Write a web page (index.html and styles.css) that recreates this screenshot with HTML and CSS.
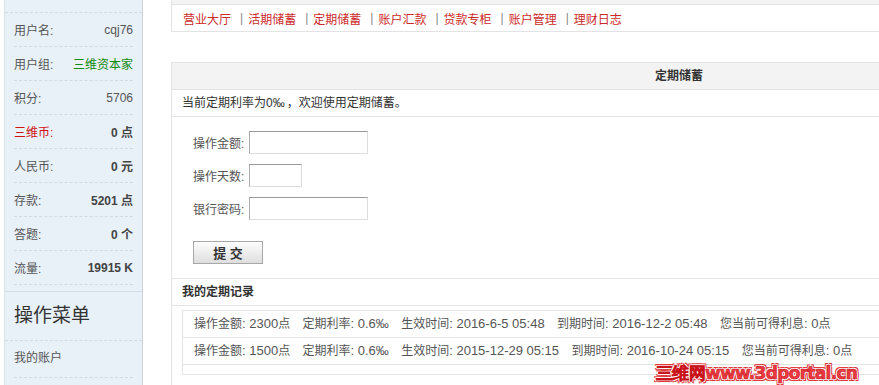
FILE: index.html
```html
<!DOCTYPE html>
<html>
  <head>
    <meta charset="utf-8">
    <link rel="stylesheet" href="styles.css">
  </head>
  <body>
    <div class="page">
      <div class="side">
        <ul class="info">
          <li><span class="lbl">用户名:</span><span class="val">cqj76</span></li>
          <li><span class="lbl">用户组:</span><span class="val green">三维资本家</span></li>
          <li><span class="lbl">积分:</span><span class="val">5706</span></li>
          <li><span class="lbl red">三维币:</span><span class="val b">0 点</span></li>
          <li><span class="lbl">人民币:</span><span class="val b">0 元</span></li>
          <li><span class="lbl">存款:</span><span class="val b">5201 点</span></li>
          <li><span class="lbl">答题:</span><span class="val b">0 个</span></li>
          <li><span class="lbl">流量:</span><span class="val b">19915 K</span></li>
        </ul>
        <div class="menu-title">操作菜单</div>
        <ul class="menu">
          <li>我的账户</li>
        </ul>
      </div>

      <div class="main">
        <div class="crumb"></div>
        <div class="nav">
          <a>营业大厅</a><span class="sep">|</span>
          <a>活期储蓄</a><span class="sep">|</span>
          <a>定期储蓄</a><span class="sep">|</span>
          <a>账户汇款</a><span class="sep">|</span>
          <a>贷款专柜</a><span class="sep">|</span>
          <a>账户管理</a><span class="sep">|</span>
          <a>理财日志</a>
        </div>

        <div class="panel">
          <div class="panel-head">定期储蓄</div>
          <div class="intro">当前定期利率为<em>0‰</em>，欢迎使用定期储蓄。</div>
          <div class="form">
            <div class="row"><label>操作金额:</label><input class="ipt" type="text"></div>
            <div class="row"><label>操作天数:</label><input class="ipt short" type="text"></div>
            <div class="row"><label>银行密码:</label><input class="ipt" type="password"></div>
            <button class="btn">提 交</button>
          </div>
          <div class="rec-title">我的定期记录</div>
          <div class="records">
            <div class="rec">
              <span>操作金额<em>: 2300</em>点</span>
              <span>定期利率<em>: 0.6‰</em></span>
              <span>生效时间<em>: 2016-6-5 05:48</em></span>
              <span>到期时间<em>: 2016-12-2 05:48</em></span>
              <span>您当前可得利息<em>: 0</em>点</span>
            </div>
            <div class="rec">
              <span>操作金额<em>: 1500</em>点</span>
              <span>定期利率<em>: 0.6‰</em></span>
              <span>生效时间<em>: 2015-12-29 05:15</em></span>
              <span>到期时间<em>: 2016-10-24 05:15</em></span>
              <span>您当前可得利息<em>: 0</em>点</span>
            </div>
            <div class="rec-foot"></div>
          </div>
        </div>
      </div>
    </div>
    <div class="watermark">三维网www.3dportal.cn</div>
  </body>
</html>
```

FILE: styles.css
```css
* {
  box-sizing: border-box;
}
html, body {
  overflow: hidden;
}
body {
  margin: 0;
  background-color: #fff;
  font-family: "Liberation Sans", "Noto Sans CJK SC", sans-serif;
  font-size: 12px;
  color: #555;
}
ul {
  list-style: none;
  margin: 0;
  padding: 0;
}
em {
  font-style: normal;
  font-size: 13px;
}

.page {
  display: flex;
  align-items: flex-start;
  width: 1200px;
}

/* left column */
.side {
  width: 139px;
  margin-left: 4px;
  padding-top: 12px;
  background-color: #e8f0f8;
  border-left: 1px solid #d9e2ea;
  border-right: 1px solid #c8d2dc;
  min-height: 400px;
}
.info {
  border-top: 1px dashed #d3dae1;
  padding-bottom: 6px;
  border-bottom: 1px solid #d3dde7;
}
.info li {
  display: flex;
  justify-content: space-between;
  align-items: center;
  height: 34px;
  margin: 0 9px;
  border-bottom: 1px dashed #d3dae1;
}
.lbl {
  color: #555;
}
.val {
  color: #555;
}
.b {
  font-weight: bold;
  color: #444;
}
.red {
  color: #d01414;
}
.green {
  color: #108a10;
}
.menu-title {
  height: 49px;
  line-height: 48px;
  padding-left: 9px;
  font-size: 19px;
  color: #333;
  border-bottom: 1px dashed #d3dae1;
}
.menu li {
  height: 37px;
  line-height: 34px;
  margin: 0 9px;
  border-bottom: 1px dashed #d3dae1;
  color: #555;
}

/* right column */
.main {
  width: 1016px;
  margin-left: 28px;
}
.crumb {
  height: 5px;
  background-color: #f3f3f3;
  border-left: 1px solid #e3e3e3;
  border-bottom: 1px solid #e3e3e3;
}
.nav {
  height: 27px;
  padding-left: 11px;
  display: flex;
  align-items: center;
  border-left: 1px solid #e3e3e3;
  border-bottom: 1px solid #e3e3e3;
}
.nav a {
  color: #cc2a2a;
}
.nav .sep {
  color: #888;
  margin: 0 5px 0 9px;
}

.panel {
  margin-top: 30px;
  border: 1px solid #e3e3e3;
}
.panel-head {
  height: 27px;
  line-height: 26px;
  text-align: center;
  font-weight: bold;
  color: #333;
  background-color: #f3f3f3;
  border-bottom: 1px solid #e3e3e3;
}
.intro {
  height: 27px;
  line-height: 26px;
  padding-left: 10px;
  color: #333;
  border-bottom: 1px solid #e3e3e3;
}
.intro em {
  font-size: 12px;
  margin-right: 2px;
}
.form {
  padding: 14px 0 14px 21px;
  border-bottom: 1px solid #e3e3e3;
}
.row {
  display: flex;
  align-items: center;
  height: 23px;
  margin-bottom: 10px;
}
.row label {
  width: 56px;
  color: #555;
}
.ipt {
  width: 119px;
  height: 23px;
  padding: 2px;
  border: 1px solid #ddd;
  border-top-color: #999;
  border-left-color: #aaa;
  font-size: 12px;
}
.ipt.short {
  width: 53px;
}
.btn {
  margin-top: 11px;
  width: 70px;
  height: 23px;
  padding: 0;
  border: 1px solid #a8a8a8;
  background: linear-gradient(#fdfdfd, #dedede);
  font-family: "Liberation Sans", "Noto Sans CJK SC", sans-serif;
  font-size: 13px;
  font-weight: bold;
  color: #333;
}
.rec-title {
  height: 27px;
  line-height: 26px;
  padding-left: 10px;
  font-weight: bold;
  color: #333;
  border-bottom: 1px solid #e3e3e3;
}
.records {
  margin: 4px 10px 12px;
  border: 1px solid #e3e3e3;
}
.rec {
  height: 27px;
  line-height: 26px;
  padding-left: 11px;
  border-bottom: 1px solid #e3e3e3;
  white-space: nowrap;
}
.rec span {
  margin-right: 9px;
}
.rec-foot {
  height: 9px;
}

.watermark {
  position: absolute;
  left: 656px;
  top: 362px;
  font-family: "DejaVu Sans", sans-serif;
  font-size: 17px;
  font-weight: bold;
  letter-spacing: -0.7px;
  color: #ee3a40;
  -webkit-text-stroke: 0.6px #c8141a;
  text-shadow: 1px 1px 0 #fff, -1px -1px 0 #fff, 1px -1px 0 #fff, -1px 1px 0 #fff,
    2px 2px 0 #e23a3f, -2px -2px 0 #e23a3f, 2px -2px 0 #e23a3f, -2px 2px 0 #e23a3f;
}
```
